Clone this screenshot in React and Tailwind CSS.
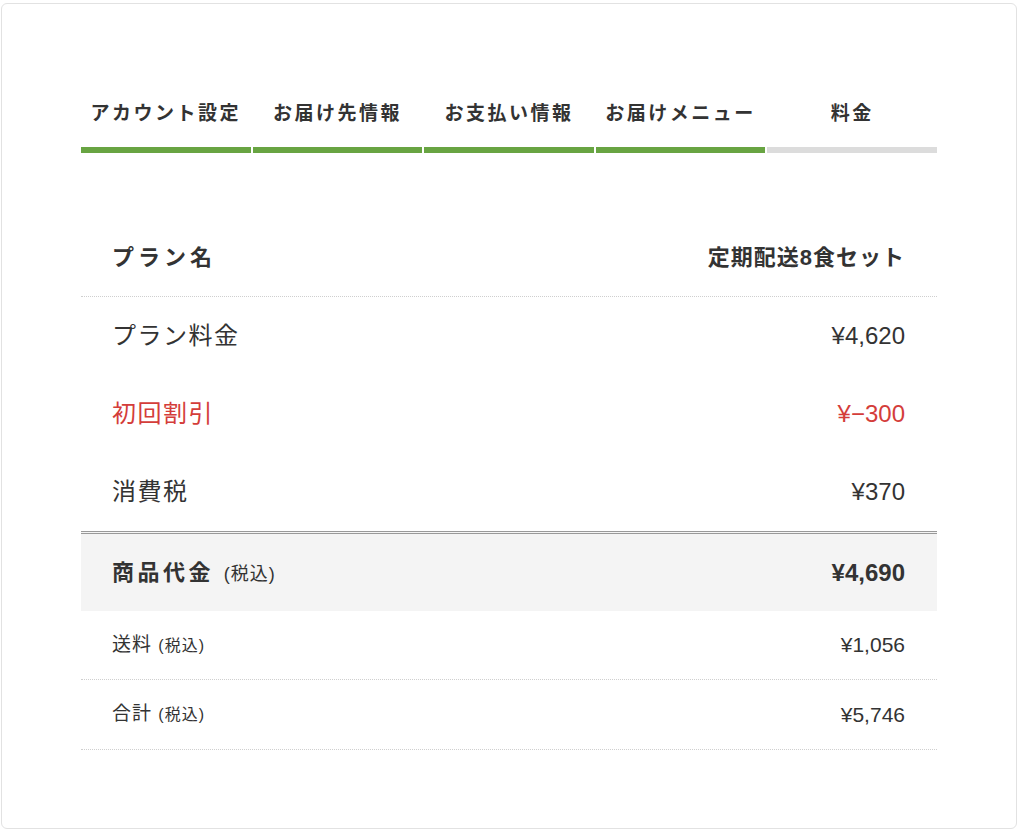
import React from "react";

const steps = [
  { label: "アカウント設定", done: true },
  { label: "お届け先情報", done: true },
  { label: "お支払い情報", done: true },
  { label: "お届けメニュー", done: true },
  { label: "料金", done: false },
];

const font = {
  fontFamily: '"Liberation Sans", "Noto Sans CJK JP", sans-serif',
};

function StepBar() {
  return (
    <div className="grid grid-cols-5 gap-x-[2px]">
      {steps.map((step) => (
        <div key={step.label} className="flex flex-col items-center">
          <div className="h-[28px] leading-[28px] text-[19px] font-bold tracking-[2.5px] text-[#333]">
            {step.label}
          </div>
          <div
            className={`mt-[19px] h-[6px] w-full ${
              step.done ? "bg-[#68a442]" : "bg-[#dcdcdc]"
            }`}
          />
        </div>
      ))}
    </div>
  );
}

function PriceRow({ label, value, red }) {
  const color = red ? "text-[#d43d3a]" : "text-[#333]";
  return (
    <div className={`flex h-[78px] items-center justify-between pl-[31px] pr-[32px] ${color}`}>
      <span className="text-[24px] tracking-[1.5px]">{label}</span>
      <span className="text-[24px]">{value}</span>
    </div>
  );
}

function SmallRow({ label, value, h }) {
  return (
    <div
      className={`flex items-center justify-between border-b border-dotted border-[#cfcfcf] pl-[31px] pr-[32px] text-[#333] ${h}`}
    >
      <span className="text-[19px] tracking-[1px]">
        {label} <span className="text-[16px]">(税込)</span>
      </span>
      <span className="text-[21px]">{value}</span>
    </div>
  );
}

export default function App() {
  return (
    <div className="min-h-screen bg-white pl-[1px] pt-[3px]" style={font}>
      <div className="h-[826px] w-[1016px] rounded-md border border-[#e2e2e2] bg-white pl-[79px] pt-[96px]">
        <div className="w-[856px]">
          <StepBar />

          <div className="mt-[65px]">
            <div className="flex h-[79px] items-center justify-between border-b border-dotted border-[#cfcfcf] pl-[31px] pr-[32px] text-[#333]">
              <span className="text-[22px] font-bold tracking-[4px]">プラン名</span>
              <span className="text-[22px] font-bold tracking-[1px]">
                定期配送8食セット
              </span>
            </div>

            <PriceRow label="プラン料金" value="¥4,620" />
            <PriceRow label="初回割引" value="¥−300" red />
            <PriceRow label="消費税" value="¥370" />

            <div className="flex h-[80px] items-center justify-between border-t-[3px] border-double border-[#999] bg-[#f4f4f4] pl-[31px] pr-[32px] text-[#333]">
              <span className="text-[22px] font-bold tracking-[3.5px]">
                商品代金{" "}
                <span className="text-[18px] font-normal tracking-[1px]">(税込)</span>
              </span>
              <span className="text-[24px] font-bold">¥4,690</span>
            </div>

            <SmallRow label="送料" value="¥1,056" h="h-[69px]" />
            <SmallRow label="合計" value="¥5,746" h="h-[70px]" />
          </div>
        </div>
      </div>
    </div>
  );
}
